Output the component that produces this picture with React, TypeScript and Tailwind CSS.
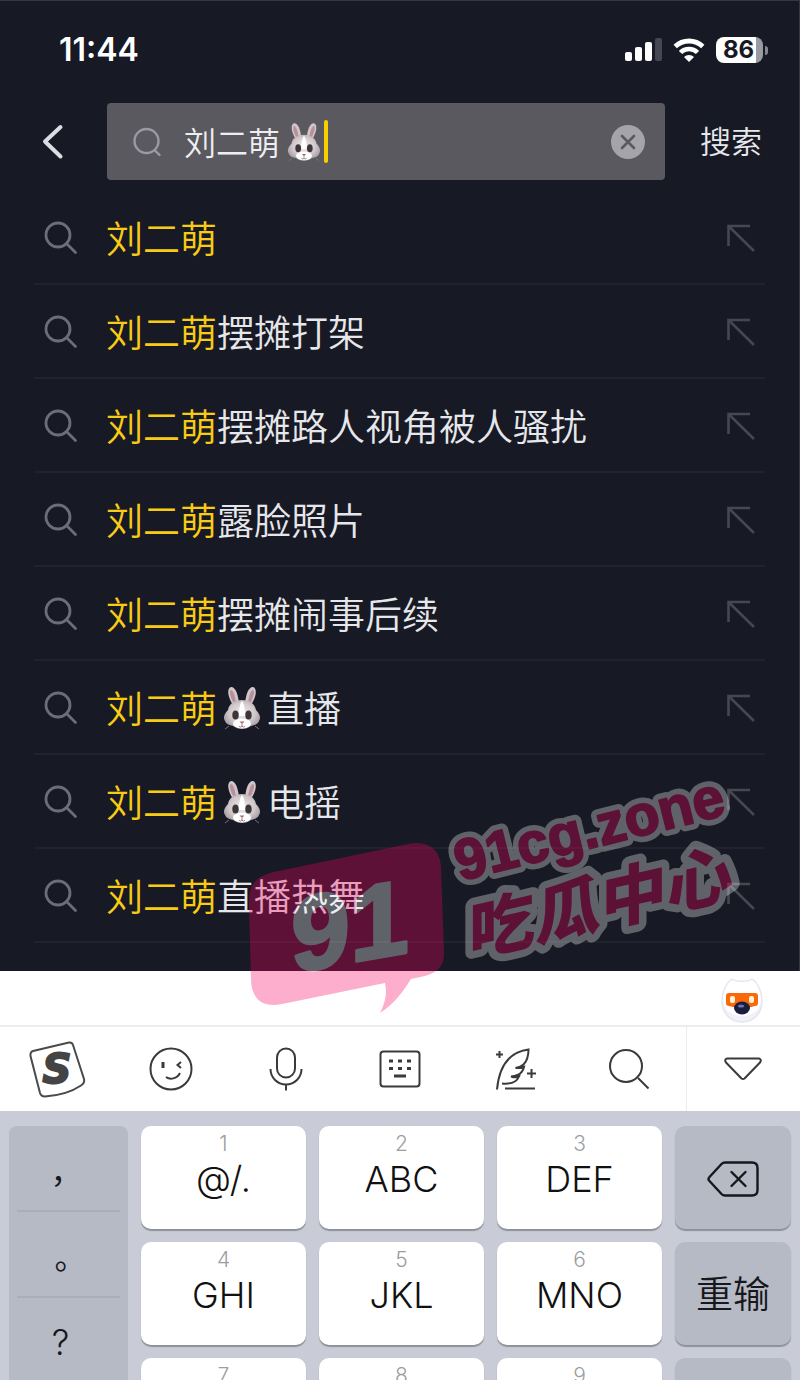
import React, { useState } from 'react';

interface ISuggestion {
    id: number;
    rabbit?: boolean;
    rest: string;
}

interface IKey {
    digit: string;
    label: string;
}

const KEYWORD = '刘二萌';

const SUGGESTIONS: ISuggestion[] = [
    { id: 1, rest: '' },
    { id: 2, rest: '摆摊打架' },
    { id: 3, rest: '摆摊路人视角被人骚扰' },
    { id: 4, rest: '露脸照片' },
    { id: 5, rest: '摆摊闹事后续' },
    { id: 6, rabbit: true, rest: '直播' },
    { id: 7, rabbit: true, rest: '电摇' },
    { id: 8, rest: '直播热舞' },
];

const KEY_ROWS: IKey[][] = [
    [{ digit: '1', label: '@/.' }, { digit: '2', label: 'ABC' }, { digit: '3', label: 'DEF' }],
    [{ digit: '4', label: 'GHI' }, { digit: '5', label: 'JKL' }, { digit: '6', label: 'MNO' }],
    [{ digit: '7', label: 'PQRS' }, { digit: '8', label: 'TUV' }, { digit: '9', label: 'WXYZ' }],
];

const Rabbit: React.FC<{ className: string }> = ({ className }) => (
    <svg viewBox="0 0 38 44" className={className} aria-label="兔子" role="img">
        <defs>
            <radialGradient id="fur" cx="50%" cy="45%" r="60%">
                <stop offset="0" stopColor="#f1eaec" />
                <stop offset="0.6" stopColor="#d0c7cb" />
                <stop offset="1" stopColor="#9d939a" />
            </radialGradient>
        </defs>
        <path d="M10 19C4 10 4 2 8 1c5 0 7 8 8 16z" fill="#cfc6ca" />
        <path d="M28 19c6-9 6-17 2-18-5 0-7 8-8 16z" fill="#cfc6ca" />
        <path d="M10 16C7 10 6 5 8 4c3 1 4 7 5 12z" fill="#b98f9b" />
        <path d="M28 16c3-6 4-11 2-12-3 1-4 7-5 12z" fill="#b98f9b" />
        <path d="M19 14c8 0 13 4 14 10 4 4 5 8 3 11-1 3-4 4-8 5-3 2-5 3-9 3s-6-1-9-3c-4-1-7-2-8-5-2-3-1-7 3-11 1-6 6-10 14-10z" fill="url(#fur)" />
        <path d="M19 15c3 4 3 10 3 15h-6c0-5 0-11 3-15z" fill="#fff" />
        <ellipse cx="19" cy="37.500" rx="9" ry="5" fill="#fff" />
        <ellipse cx="12.500" cy="29" rx="3.200" ry="4.500" fill="#3d3537" />
        <ellipse cx="25.500" cy="29" rx="3.200" ry="4.500" fill="#3d3537" />
        <path d="M16.500 35.500h5L19 38z" fill="#a8686f" />
        <path d="M19 38v2m-3 0c1 1.500 2 1.500 3 0 1 1.500 2 1.500 3 0" fill="none" stroke="#8d7d80" strokeWidth="1" />
        <path d="M2 43l4-3M36 43l-4-3" stroke="#77717b" strokeWidth="1" />
    </svg>
);

const StatusBar: React.FC = () => (
    <div className="flex h-[102px] items-center justify-between pb-1 pl-[59px] pr-[31px]">
        <span className="text-[32px] font-semibold leading-9">11:44</span>
        <div className="flex items-center gap-[11px]">
            <svg viewBox="0 0 37 24" className="h-6 w-[37px]">
                <rect x="0" y="14" width="7" height="9" rx="2" fill="#fff" />
                <rect x="10" y="9" width="7" height="14" rx="2" fill="#fff" />
                <rect x="20" y="4" width="7" height="19" rx="2" fill="#fff" />
                <rect x="30" y="0" width="7" height="23" rx="2" fill="#454752" />
            </svg>
            <svg viewBox="0 0 32 24" className="h-6 w-8">
                <path d="M2.200 8.500a20 20 0 0 1 27.600 0" fill="none" stroke="#fff" strokeWidth="4.800" />
                <path d="M7.500 14.500a12 12 0 0 1 17 0" fill="none" stroke="#fff" strokeWidth="4.600" />
                <path d="M16 24l-5-5a7 7 0 0 1 10 0z" fill="#fff" />
            </svg>
            <div className="flex items-center gap-[2px]">
                <span className="flex h-[26px] w-[47px] items-center justify-center rounded-lg bg-linear-to-r from-white from-86% to-[#9a9ba2] to-86% pr-[2px] text-[24px] font-bold leading-6 text-[#171924]">
                    86
                </span>
                <span className="h-[9px] w-[3px] rounded-r-full bg-[#85868e]" />
            </div>
        </div>
    </div>
);

const SearchHeader: React.FC = () => {
    const [query, setQuery] = useState<string>(KEYWORD);

    return (
        <form className="flex items-center pl-[42px] pr-[37px]" onSubmit={(e) => e.preventDefault()}>
            <button type="button" aria-label="返回">
                <svg viewBox="0 0 22 36" className="h-9 w-[22px]" fill="none" stroke="#dcdde2" strokeWidth="4" strokeLinecap="round" strokeLinejoin="round">
                    <path d="M18.500 3L3 17.500 18.500 32.500" />
                </svg>
            </button>
            <div className="ml-[43px] flex h-[77px] flex-1 items-center rounded-sm bg-[#5a5960] pl-[26px] pr-5">
                <svg viewBox="0 0 28 30" className="h-[30px] w-7" fill="none" stroke="#9b9aa3" strokeWidth="2.400" strokeLinecap="round">
                    <circle cx="13.500" cy="14" r="12" />
                    <path d="M21.500 23l5 5" />
                </svg>
                <input
                    type="text"
                    aria-label="搜索内容"
                    value={query}
                    onChange={(e) => setQuery(e.target.value)}
                    className="field-sizing-content ml-[23px] h-12 bg-transparent pb-[2px] text-[32px] font-[350] leading-[46px] text-[#eeeef0] outline-none"
                />
                <Rabbit className="ml-[7px] h-10 w-[34px]" />
                <span className="ml-[3px] h-[43px] w-1 rounded-full bg-[#f9cf00]" />
                <button type="button" aria-label="清除" className="ml-auto" onClick={() => setQuery('')}>
                    <svg viewBox="0 0 34 34" className="size-[34px]">
                        <circle cx="17" cy="17" r="17" fill="#a4a4a9" />
                        <path d="M11 11l12 12M23 11L11 23" stroke="#5a5960" strokeWidth="2.600" strokeLinecap="round" />
                    </svg>
                </button>
            </div>
            <button type="submit" className="ml-[35px] whitespace-nowrap text-[31px] font-[350] leading-[46px] text-[#e8e8ec]">搜索</button>
        </form>
    );
};

const SuggestionRow: React.FC<{ item: ISuggestion }> = ({ item }) => (
    <li className="border-b-2 border-[#20222d]">
        <button type="button" className="flex h-[92px] w-full items-center pl-[10px] pr-[10px] pt-[2px] text-left">
            <svg viewBox="0 0 34 34" className="size-[34px] shrink-0" fill="none" stroke="#6c6e77" strokeWidth="2.800" strokeLinecap="round">
                <circle cx="14" cy="14" r="12" />
                <path d="M22.500 22.500l9 9" />
            </svg>
            <span className="ml-7 flex items-center whitespace-nowrap pt-1 text-[37px] font-[350] leading-[54px]">
                <span className="text-[#f8cb15]">{KEYWORD}</span>
                {item.rabbit && <Rabbit className="mx-[6px] mb-1 h-11 w-[38px]" />}
                <span className="text-[#e6e7ea]">{item.rest}</span>
            </span>
            <svg viewBox="0 0 28 28" className="ml-auto size-7 shrink-0" fill="none" stroke="#454751" strokeWidth="2.600">
                <path d="M1.500 22V2H23M2 2.500L27 27" />
            </svg>
        </button>
    </li>
);

// Semi-transparent site stamp floating over the list
const Stamp: React.FC = () => (
    <svg viewBox="0 0 500 250" className="pointer-events-none absolute right-[60px] top-[770px] h-[250px] w-[500px]">
        <g opacity="0.32" strokeLinejoin="round">
            <path
                d="M9 137C9 116 13 107 34 102L168 74C188 70 201 80 201 98L204 182C204 198 197 202 185 206L171 209C163 222 154 234 140 243C146 231 147 222 145 213L42 234C22 238 12 229 11 210Z"
                fill="#f5005f"
            />
            <g transform="translate(51 203) skewY(-10)">
                <text x="0" y="0" fontSize="106" fontWeight="700" fontFamily="'Liberation Sans'" fill="#fff" stroke="#fff" strokeWidth="3">91</text>
            </g>
            <g transform="translate(220 111) rotate(-14)" fontSize="57" fontWeight="700" fontFamily="'Liberation Sans'">
                <text x="0" y="0" fill="#fff" stroke="#fff" strokeWidth="13">91cg.zone</text>
                <text x="0" y="0" fill="#f5005f" stroke="#f5005f" strokeWidth="2">91cg.zone</text>
            </g>
            <g transform="translate(229 187) skewY(-13)" fontSize="66" fontWeight="900" fontFamily="'Noto Sans CJK SC'">
                <text x="0" y="0" fill="#fff" stroke="#fff" strokeWidth="15">吃瓜中心</text>
                <text x="0" y="0" fill="#f5005f">吃瓜中心</text>
            </g>
        </g>
    </svg>
);

const RobotIcon: React.FC = () => (
    <svg viewBox="0 0 44 48" className="h-12 w-11">
        <path d="M12 3c4 3 16 3 20 0 6 4 10 13 10 22 0 12-8 21-20 21S2 37 2 25C2 16 6 7 12 3z" fill="#f1f1f7" stroke="#e4e6f0" strokeWidth="1.500" />
        <path d="M12 4c4 3 16 3 20 0 5 3 9 12 9 20 0 9-8 16-19 16S3 33 3 24C3 16 7 7 12 4z" fill="#fff" />
        <path d="M9 17h26c2 0 3 1 3 3v7c0 2-1 3-3 3l-4 1H13l-4-1c-2 0-3-1-3-3v-7c0-2 1-3 3-3z" fill="#f9690c" />
        <rect x="10" y="20" width="5" height="7" rx="2" fill="#fff3cf" />
        <rect x="29" y="20" width="5" height="7" rx="2" fill="#fff3cf" />
        <ellipse cx="22" cy="32" rx="8" ry="6.500" fill="#1b1d3d" />
        <ellipse cx="21" cy="30" rx="3" ry="1.500" fill="#6a76b5" />
    </svg>
);

const TOOLS: { name: string; icon: React.ReactNode }[] = [
    {
        name: '输入法',
        icon: (
            <svg viewBox="0 0 56 56" className="size-14 overflow-visible" fill="none" stroke="#4a4a4a" strokeWidth="2">
                <path d="M4 10L40 1.500Q43 1 44 4L55 38Q56 42 52 44.500 38 54 16 55.500 12 55.500 11 52L1.500 15Q1 11 4 10z" />
                <text x="28" y="42" textAnchor="middle" fontSize="40" fontWeight="700" fontStyle="italic" fontFamily="'DejaVu Sans'" fill="#444" stroke="#444" strokeWidth="2">S</text>
            </svg>
        ),
    },
    {
        name: '表情',
        icon: (
            <svg viewBox="0 0 44 44" className="size-11" fill="none" stroke="#3a3a3a" strokeWidth="2">
                <circle cx="22" cy="22" r="20.500" />
                <path d="M14 15v6" strokeWidth="3" />
                <path d="M32 15l-3.500 3 3.500 3" />
                <path d="M17 30c4 3 11 2 14-4" />
            </svg>
        ),
    },
    {
        name: '语音',
        icon: (
            <svg viewBox="0 0 34 44" className="h-11 w-[34px]" fill="none" stroke="#3a3a3a" strokeWidth="2">
                <rect x="8" y="1.500" width="18" height="29" rx="9" />
                <path d="M1.500 22a15.500 15.500 0 0 0 31 0M17 37v6.500" />
            </svg>
        ),
    },
    {
        name: '键盘',
        icon: (
            <svg viewBox="0 0 42 38" className="h-[38px] w-[42px]" fill="none" stroke="#3a3a3a" strokeWidth="2">
                <rect x="1.500" y="1.500" width="39" height="35" rx="3" />
                <path d="M10 11h4M19 11h4M28 11h4M10 18.500h4M19 18.500h4M28 18.500h4M15 26h12" strokeWidth="3" />
            </svg>
        ),
    },
    {
        name: '智能写作',
        icon: (
            <svg viewBox="0 0 42 42" className="ml-1 size-[42px]" fill="none" stroke="#3a3a3a" strokeWidth="2">
                <path d="M2 41.500C4 20 13 4 33.500 1.500c0 7-2 12-5 15-2 2-5 3-8 3.500 3 .3 6 0 8.500-1-1 4-4 7-6.500 8-2 1-4 1.500-6.500 1.500 3 1 6 1 8 0-2 5-7 8-17 7" />
                <path d="M10 40.500h30M4.500 3v7M1 6.500h7M36.500 21v9M32 25.500h9" />
            </svg>
        ),
    },
    {
        name: '搜索',
        icon: (
            <svg viewBox="0 0 42 42" className="size-[42px]" fill="none" stroke="#3a3a3a" strokeWidth="2">
                <circle cx="18" cy="18" r="16" />
                <path d="M30 30l10.500 10.500" />
            </svg>
        ),
    },
    {
        name: '收起',
        icon: (
            <svg viewBox="0 0 38 24" className="h-6 w-[38px]" fill="none" stroke="#3a3a3a" strokeWidth="2" strokeLinejoin="round">
                <path d="M3 1.500h32q3 1 1 4L20.500 21.500q-1.500 1-3 0L2 5.500q-2-3 1-4z" />
            </svg>
        ),
    },
];

const Keyboard: React.FC = () => (
    <div className="grid auto-rows-[103px] grid-cols-[119fr_165fr_165fr_165fr_116fr] gap-[13px] bg-[#c9ccd7] px-[9px] pt-[15px]">
        <div className="row-span-3 flex flex-col rounded-lg bg-[#b6bac4] px-2 text-[#16181d]">
            <button type="button" className="h-[86px] border-b-2 border-[#aaaeb8] pr-1 pt-2 text-[32px] leading-10">，</button>
            <button type="button" className="h-[86px] border-b-2 border-[#aaaeb8] pl-1 pt-2 text-[32px] leading-10">。</button>
            <button type="button" className="h-[86px] border-b-2 border-[#aaaeb8] pr-4 pt-1 text-[35px] font-light leading-10">?</button>
        </div>
        {KEY_ROWS.map((row, index) => (
            <React.Fragment key={index}>
                {row.map((key) => (
                    <button
                        key={key.digit}
                        type="button"
                        className="flex flex-col items-center rounded-[10px] bg-white pt-2 font-light shadow-[0_2px_1px_#8e9199]"
                    >
                        <span className="text-[21px] leading-5 text-[#9d9da0]">{key.digit}</span>
                        <span className="text-[36px] leading-[50px] text-[#111]">{key.label}</span>
                    </button>
                ))}
                <button
                    type="button"
                    aria-label={index === 0 ? '删除' : undefined}
                    className="flex items-center justify-center rounded-[10px] bg-[#b6bac4] pt-[2px] text-[37px] font-[350] leading-[52px] text-[#16181d] shadow-[0_2px_1px_#8e9199]"
                >
                    {index === 0 && (
                        <svg viewBox="0 0 52 36" className="h-9 w-[52px]" fill="none" stroke="#16181d" strokeWidth="2.400" strokeLinecap="round" strokeLinejoin="round">
                            <path d="M18 1.500h27q5.500 0 5.500 5.500v22q0 5.500-5.500 5.500H18q-2 0-3.500-1.500L2.500 20q-2-2 0-4L14.500 3q1.500-1.500 3.500-1.500z" />
                            <path d="M24.500 11l14 14M38.500 11l-14 14" />
                        </svg>
                    )}
                    {index === 1 && '重输'}
                    {index === 2 && '0'}
                </button>
            </React.Fragment>
        ))}
    </div>
);

const App: React.FC = () => {
    return (
        <div className="relative flex h-screen flex-col overflow-hidden bg-[#c9ccd7] font-['Inter','Noto_Sans_CJK_SC',sans-serif]">
            <main className="shrink-0 border-r border-t border-[#343641] bg-[#171924] pb-7 text-white">
                <StatusBar />
                <SearchHeader />
                <ul className="mx-[34px] mt-[11px]">
                    {SUGGESTIONS.map((item) => (
                        <SuggestionRow key={item.id} item={item} />
                    ))}
                </ul>
            </main>

            {/* Keyboard panel */}
            <section className="shrink-0 bg-white">
                <div className="flex h-14 items-center justify-end border-b-2 border-[#ececee] pr-9 pt-1">
                    <button type="button" aria-label="助手">
                        <RobotIcon />
                    </button>
                </div>
                <div className="grid h-[84px] grid-cols-7">
                    {TOOLS.map((tool) => (
                        <button
                            key={tool.name}
                            type="button"
                            aria-label={tool.name}
                            className="flex items-center justify-center border-[#ececee] last:border-l"
                        >
                            {tool.icon}
                        </button>
                    ))}
                </div>
                <Keyboard />
            </section>

            <Stamp />
        </div>
    );
};

export default App;
